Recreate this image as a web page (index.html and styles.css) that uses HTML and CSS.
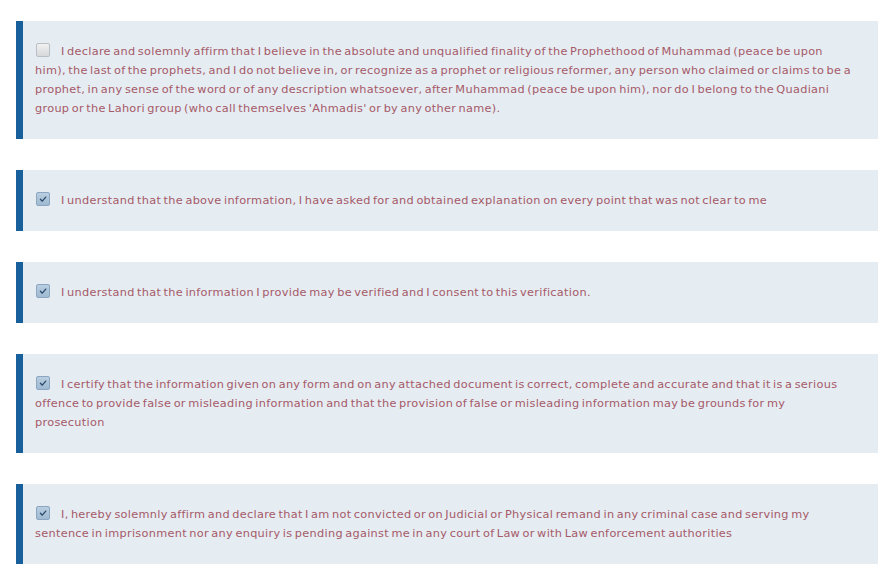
FILE: index.html
```html
<!DOCTYPE html>
<html>
<head>
<meta charset="utf-8">
<link rel="stylesheet" href="styles.css">
</head>
<body>
<div class="list">
  <div class="item">
    <label class="lbl"><span class="cb"></span>I declare and solemnly affirm that I believe in the absolute and unqualified finality of the Prophethood of Muhammad (peace be upon him), the last of the prophets, and I do not believe in, or recognize as a prophet or religious reformer, any person who claimed or claims to be a prophet, in any sense of the word or of any description whatsoever, after Muhammad (peace be upon him), nor do I belong to the Quadiani group or the Lahori group (who call themselves 'Ahmadis' or by any other name).</label>
  </div>
  <div class="item">
    <label class="lbl"><span class="cb on"><svg viewBox="0 0 14 14"><path d="M4 7.3 L6.2 9.5 L10.2 4.8" /></svg></span>I understand that the above information, I have asked for and obtained explanation on every point that was not clear to me</label>
  </div>
  <div class="item">
    <label class="lbl"><span class="cb on"><svg viewBox="0 0 14 14"><path d="M4 7.3 L6.2 9.5 L10.2 4.8" /></svg></span>I understand that the information I provide may be verified and I consent to this verification.</label>
  </div>
  <div class="item">
    <label class="lbl"><span class="cb on"><svg viewBox="0 0 14 14"><path d="M4 7.3 L6.2 9.5 L10.2 4.8" /></svg></span>I certify that the information given on any form and on any attached document is correct, complete and accurate and that it is a serious offence to provide false or misleading information and that the provision of false or misleading information may be grounds for my prosecution</label>
  </div>
  <div class="item">
    <label class="lbl"><span class="cb on"><svg viewBox="0 0 14 14"><path d="M4 7.3 L6.2 9.5 L10.2 4.8" /></svg></span>I, hereby solemnly affirm and declare that I am not convicted or on Judicial or Physical remand in any criminal case and serving my sentence in imprisonment nor any enquiry is pending against me in any court of Law or with Law enforcement authorities</label>
  </div>
</div>
</body>
</html>
```
FILE: styles.css
```css
html, body {
  margin: 0;
  padding: 0;
  background: #ffffff;
}
.list {
  display: flex;
  flex-direction: column;
  gap: 31px;
  padding: 21px 18px 0 16px;
}
.item {
  background: #e5ecf2;
  border-left: 7px solid #17609c;
  padding: 21px 25px 21px 12px;
}
.lbl {
  display: block;
  font-family: "DejaVu Sans", sans-serif;
  font-size: 11.3px;
  letter-spacing: 0.3px;
  word-spacing: -1.5px;
  line-height: 19px;
  color: #a65a68;
}
.cb {
  display: inline-block;
  width: 12px;
  height: 12px;
  margin: 0 11px 0 1px;
  vertical-align: -2px;
  border: 1px solid #b9bfc5;
  border-radius: 2px;
  background: linear-gradient(#f1f1f1, #d6d8da);
  box-sizing: content-box;
}
.cb.on {
  background: linear-gradient(#b9cee0, #9fbad2);
  border-color: #8aa6c0;
}
.cb svg {
  display: block;
  width: 12px;
  height: 12px;
}
.cb svg path {
  fill: none;
  stroke: #2e4d6e;
  stroke-width: 1.6;
  stroke-linecap: round;
  stroke-linejoin: round;
}
```
